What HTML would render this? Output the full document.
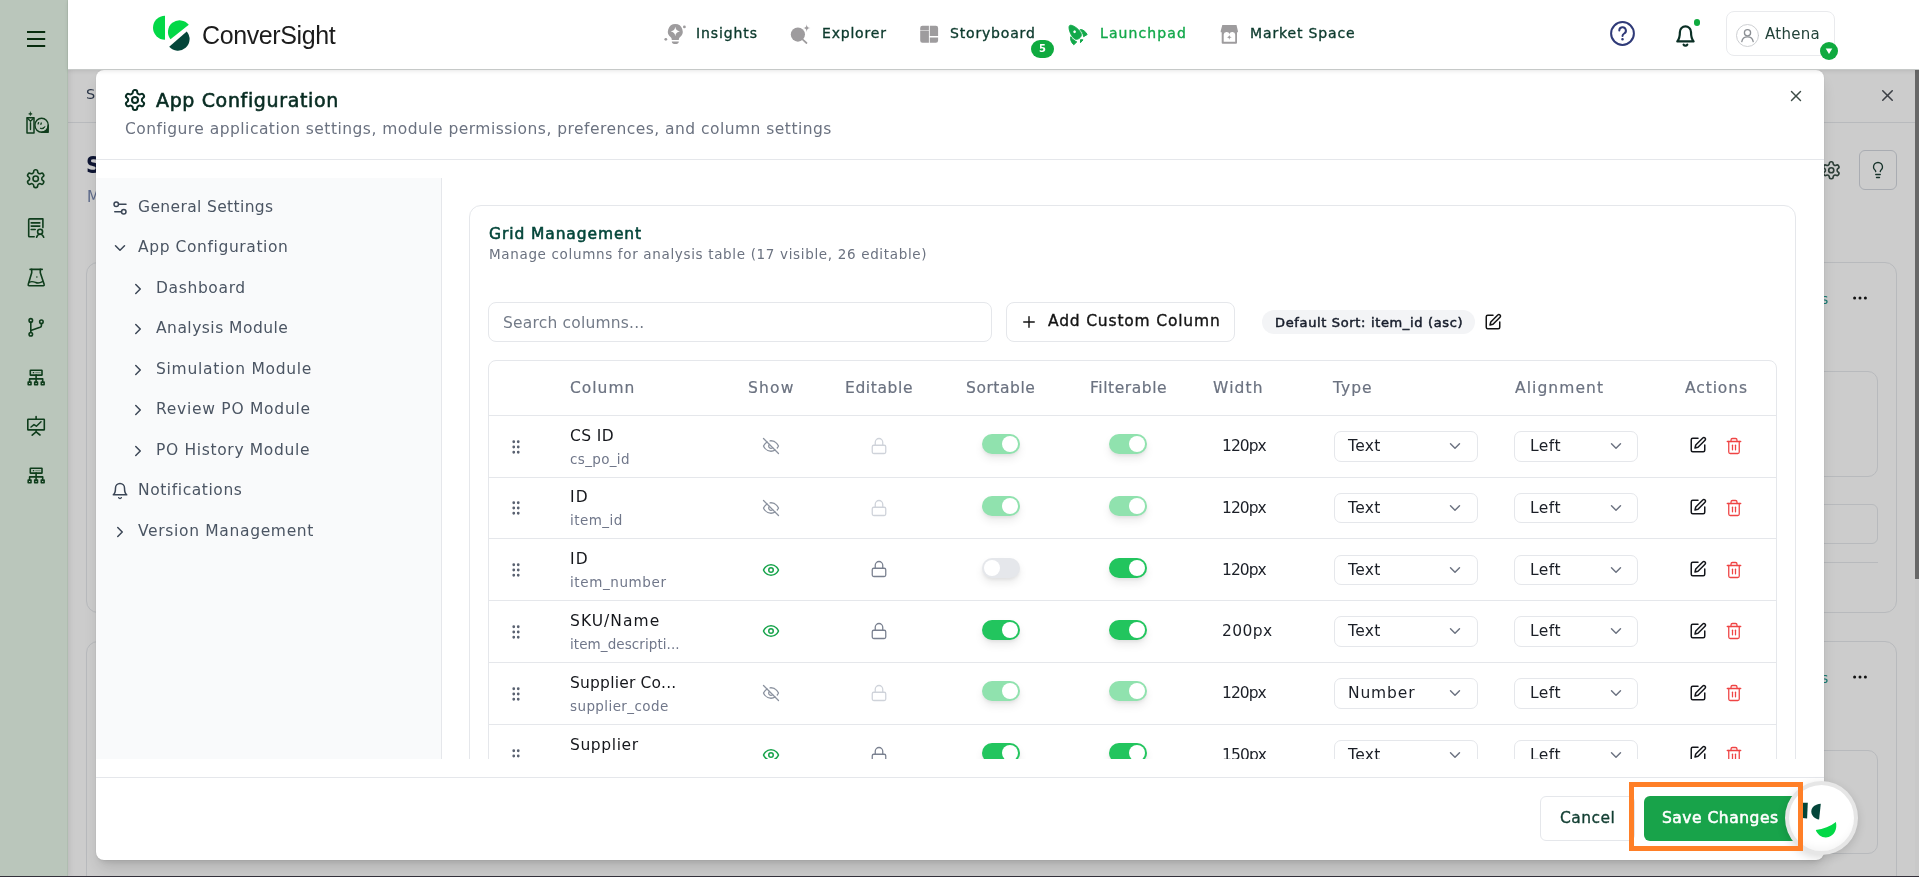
<!DOCTYPE html>
<html lang="en">
<head>
<meta charset="utf-8">
<title>ConverSight – App Configuration</title>
<style>
*{box-sizing:border-box}
html,body{margin:0;padding:0}
body{width:1919px;height:877px;overflow:hidden;position:relative;background:#ccc;font-family:"DejaVu Sans","Liberation Sans",sans-serif;-webkit-font-smoothing:antialiased}
.t{position:absolute;white-space:nowrap;line-height:normal;will-change:transform;font-family:"DejaVu Sans","Liberation Sans",sans-serif;font-weight:400}
.t.b{font-family:"DejaVu Sans Condensed","DejaVu Sans","Liberation Sans",sans-serif;font-stretch:condensed}
.t.l{font-family:"Liberation Sans","DejaVu Sans",sans-serif}
.i{position:absolute;display:block;overflow:visible}
.a{position:absolute}
.layer{position:absolute;left:0;top:0;width:1919px;height:877px}
.bx{position:absolute;border:1px solid #e5e7eb;background:#fff}
.ln{position:absolute;height:1px;background:#e5e7eb}
/* dimmed background page */
#page .bx{border-color:#b8babd;background:transparent}
#page .ln{background:#b8babd}
/* rail */
#rail{position:absolute;left:0;top:0;width:68px;height:877px;background:#bac6bb;border-right:1px solid #afbdb0;box-shadow:1px 0 6px rgba(0,0,0,.10);color:#0f3d1c}
/* top bar */
#top{position:absolute;left:68px;top:0;width:1851px;height:70px;background:#fff;border-bottom:1px solid #c6c9c8;box-shadow:0 1px 4px rgba(0,0,0,.10)}
/* modal */
#modal{position:absolute;left:96px;top:70px;width:1728px;height:790px;background:#fff;border-radius:8px;box-shadow:0 10px 15px -3px rgba(0,0,0,.14),0 4px 6px -3px rgba(0,0,0,.11),0 0 2px rgba(0,0,0,.10)}
#mbody{position:absolute;left:96px;top:178px;width:1728px;height:581px;overflow:hidden}
#mbody>.layer{left:-96px;top:-178px}
.tg{position:absolute;width:38px;height:20px;border-radius:10px;background:#22c55e;box-shadow:0 5px 8px rgba(0,0,0,.08),0 2px 3px rgba(0,0,0,.05)}
.tg::after{content:"";position:absolute;right:2px;top:2px;width:16px;height:16px;border-radius:50%;background:#fff}
.tg.dis{background:#90e2ae}
.tg.off{background:#e5e7eb}
.tg.off::after{right:auto;left:2px}
.sel{position:absolute;height:30.6px;border:1px solid #e5e7eb;border-radius:7px;background:#fff}
</style>
</head>
<body>

<main id="page" class="layer">
<div class="ln" style="left:68px;top:122px;width:1847px"></div>
<svg class="i" style="left:1877.5px;top:85.8px;width:19px;height:19px;color:#3b3f45;" viewBox="0 0 24 24" fill="none" stroke="currentColor" stroke-width="1.9" stroke-linecap="round" stroke-linejoin="round"><path d="M18 6 6 18"/><path d="m6 6 12 12"/></svg>
<svg class="i" style="left:1821px;top:160px;width:20.5px;height:20.5px;color:#2d3f38;" viewBox="0 0 24 24" fill="none" stroke="currentColor" stroke-width="1.9" stroke-linecap="round" stroke-linejoin="round"><path d="M12.22 2h-.44a2 2 0 0 0-2 2v.18a2 2 0 0 1-1 1.73l-.43.25a2 2 0 0 1-2 0l-.15-.08a2 2 0 0 0-2.73.73l-.22.38a2 2 0 0 0 .73 2.73l.15.1a2 2 0 0 1 1 1.72v.51a2 2 0 0 1-1 1.74l-.15.09a2 2 0 0 0-.73 2.73l.22.38a2 2 0 0 0 2.73.73l.15-.08a2 2 0 0 1 2 0l.43.25a2 2 0 0 1 1 1.73V20a2 2 0 0 0 2 2h.44a2 2 0 0 0 2-2v-.18a2 2 0 0 1 1-1.73l.43-.25a2 2 0 0 1 2 0l.15.08a2 2 0 0 0 2.73-.73l.22-.39a2 2 0 0 0-.73-2.73l-.15-.08a2 2 0 0 1-1-1.74v-.5a2 2 0 0 1 1-1.74l.15-.09a2 2 0 0 0 .73-2.73l-.22-.38a2 2 0 0 0-2.73-.73l-.15.08a2 2 0 0 1-2 0l-.43-.25a2 2 0 0 1-1-1.73V4a2 2 0 0 0-2-2z"/><circle cx="12" cy="12" r="3"/></svg>
<div class="bx" style="left:1859px;top:150px;width:38px;height:40px;border-radius:6px;border-color:#a9acb2"></div>
<svg class="i" style="left:1869px;top:161px;width:18px;height:18px;color:#17332b;" viewBox="0 0 24 24" fill="none" stroke="currentColor" stroke-width="1.8" stroke-linecap="round" stroke-linejoin="round"><path d="M15 14c.2-1 .7-1.7 1.5-2.5 1-.9 1.5-2.2 1.5-3.5A6 6 0 0 0 6 8c0 1 .2 2.2 1.5 3.5.7.7 1.3 1.5 1.5 2.5"/><path d="M9 18h6"/><path d="M10 22h4"/></svg>
<div class="bx" style="left:86px;top:262px;width:1811px;height:351px;border-radius:12px"></div>
<div class="bx" style="left:105px;top:371px;width:1773px;height:106px;border-radius:10px"></div>
<div class="bx" style="left:105px;top:504px;width:1773px;height:40px;border-radius:6px"></div>
<div class="ln" style="left:105px;top:562px;width:1773px"></div>
<div class="bx" style="left:86px;top:641px;width:1811px;height:351px;border-radius:12px"></div>
<div class="bx" style="left:105px;top:750px;width:1773px;height:104px;border-radius:10px"></div>
<svg class="i" style="left:1852px;top:295px;width:16px;height:6px" viewBox="0 0 16 6" fill="#111"><circle cx="2.6" cy="3" r="1.5"/><circle cx="8" cy="3" r="1.5"/><circle cx="13.4" cy="3" r="1.5"/></svg>
<svg class="i" style="left:1852px;top:674px;width:16px;height:6px" viewBox="0 0 16 6" fill="#111"><circle cx="2.6" cy="3" r="1.5"/><circle cx="8" cy="3" r="1.5"/><circle cx="13.4" cy="3" r="1.5"/></svg>
<span class="t" style="left:86px;top:85.9px;font-size:14.5px;color:#2b3648;">S</span>
<span class="t b" style="left:86px;top:152.1px;font-size:23px;color:#0e1533;font-weight:700;">S</span>
<span class="t" style="left:86.9px;top:187.9px;font-size:15px;color:#5f6c8c;">M</span>
<span class="t" style="left:1821px;top:290.5px;font-size:14px;color:#197a72;">s</span>
<span class="t" style="left:1821px;top:669.5px;font-size:14px;color:#197a72;">s</span>
<div class="a" style="left:1915px;top:70px;width:4px;height:807px;background:#c9c9c9"></div>
<div class="a" style="left:1915px;top:70px;width:4px;height:509px;background:#676767"></div>
</main>
<aside id="rail">
<svg class="i" style="left:27px;top:30px;width:19px;height:18px" viewBox="0 0 19 18" fill="none" stroke="#072c0e" stroke-width="2"><path d="M0 2.05h18.2M0 9.05h18.2M0 16h18.2"/></svg>
<svg class="i" style="left:25px;top:111px;width:26px;height:24px" viewBox="0 0 26 24" fill="none" stroke="#0f3d1c" stroke-width="1.5" stroke-linejoin="round" stroke-linecap="round"><path d="M5.4 1.1c.2 1.2.6 1.6 1.8 1.8-1.2.2-1.6.6-1.8 1.8-.2-1.2-.6-1.6-1.8-1.8 1.2-.2 1.6-.6 1.8-1.8z" fill="#0f3d1c" stroke-width=".5"/><rect x="2" y="6.8" width="7" height="15.1"/><path d="M2.3 7l3.2 3.3 3.2-3.3" stroke-width="1.3"/><path d="M5.5 11.7v6.9" stroke-width="1.4"/><ellipse cx="16.6" cy="14.25" rx="6.65" ry="7" stroke-width="1.4"/><path d="M23.25 14.25v7h-6.65a6.65 7 0 0 0 6.65-7z" fill="#0f3d1c" stroke-width="1.3"/><path d="M13.6 11.6l-.5 1.3M16.3 12l-.4 1.3" stroke-width="1.3"/><path d="M15.5 17.4c1.8.3 3.3-.5 4.3-1.9-.3 1.9-2.4 3-4.3 1.9z" fill="#0f3d1c" stroke-width=".9"/></svg>
<svg class="i" style="left:25.2px;top:168.4px;width:21.4px;height:21.4px;" viewBox="0 0 24 24" fill="none" stroke="currentColor" stroke-width="1.8" stroke-linecap="round" stroke-linejoin="round"><path d="M12.22 2h-.44a2 2 0 0 0-2 2v.18a2 2 0 0 1-1 1.73l-.43.25a2 2 0 0 1-2 0l-.15-.08a2 2 0 0 0-2.73.73l-.22.38a2 2 0 0 0 .73 2.73l.15.1a2 2 0 0 1 1 1.72v.51a2 2 0 0 1-1 1.74l-.15.09a2 2 0 0 0-.73 2.73l.22.38a2 2 0 0 0 2.73.73l.15-.08a2 2 0 0 1 2 0l.43.25a2 2 0 0 1 1 1.73V20a2 2 0 0 0 2 2h.44a2 2 0 0 0 2-2v-.18a2 2 0 0 1 1-1.73l.43-.25a2 2 0 0 1 2 0l.15.08a2 2 0 0 0 2.73-.73l.22-.39a2 2 0 0 0-.73-2.73l-.15-.08a2 2 0 0 1-1-1.74v-.5a2 2 0 0 1 1-1.74l.15-.09a2 2 0 0 0 .73-2.73l-.22-.38a2 2 0 0 0-2.73-.73l-.15.08a2 2 0 0 1-2 0l-.43-.25a2 2 0 0 1-1-1.73V4a2 2 0 0 0-2-2z"/><circle cx="12" cy="12" r="3"/></svg>
<svg class="i" style="left:25px;top:216px;width:22px;height:24px" viewBox="0 0 22 24" fill="none" stroke="#0f3d1c" stroke-width="1.6" stroke-linecap="round" stroke-linejoin="round"><path d="M9.2 20.8H4.6a.9.9 0 0 1-.9-.9V3.8a.9.9 0 0 1 .9-.9H17.9v8.7"/><path d="M6.2 6.9h8.6M6.2 10.1h8.6M6.2 13.5h4"/><circle cx="15.1" cy="15.7" r="2.5"/><path d="M11.6 21.3c.6-2 1.9-3 3.5-3s2.9 1 3.6 3"/></svg>
<svg class="i" style="left:26px;top:268px;width:20px;height:20px" viewBox="0 0 20 20" fill="none" stroke="#0f3d1c" stroke-width="1.6" stroke-linecap="round" stroke-linejoin="round"><path d="M4.1 1.4h12.1"/><path d="M5.7 1.4v3.3L2.2 16.5a.95.95 0 0 0 .9 1.3h14.2a.95.95 0 0 0 .9-1.3L14.3 4.7V1.4"/><path d="M3.5 14.2c2.4-1.3 4-.6 6.2.3s4.5.4 6.7-.9" stroke-width="1.4"/><circle cx="10.9" cy="9" r=".75" fill="#0f3d1c" stroke="none"/></svg>
<svg class="i" style="left:26px;top:316px;width:20px;height:22px" viewBox="0 0 20 22" fill="none" stroke="#0f3d1c" stroke-width="1.6" stroke-linecap="round" stroke-linejoin="round"><circle cx="4.8" cy="4.4" r="1.75"/><circle cx="4.8" cy="18.3" r="1.75"/><circle cx="15.4" cy="5.7" r="1.75"/><path d="M4.8 6.2v10.3"/><path d="M15.4 7.5v2.2c0 .8-.5 1.3-1.3 1.6L4.8 14.4"/></svg>
<svg class="i" style="left:26px;top:367.5px;width:20px;height:19px" viewBox="0 0 20 19" fill="none" stroke="#0f3d1c" stroke-width="1.6" stroke-linecap="round" stroke-linejoin="round" stroke-width="1.5"><rect x="4.3" y="2.2" width="11.7" height="4.9" rx=".4"/><path d="M7.3 4.7h.4" stroke-width="1.3"/><path d="M9.6 4.7h4.6" stroke-width=".7" opacity=".7"/><path d="M10.1 7.1v6.3M3.6 13.4v-2.5h13.1v2.5"/><rect x="2.2" y="14.1" width="2.8" height="2.7"/><rect x="8.7" y="14.1" width="2.8" height="2.7"/><rect x="15.3" y="14.1" width="2.8" height="2.7"/></svg>
<svg class="i" style="left:26px;top:466.2px;width:20px;height:19px" viewBox="0 0 20 19" fill="none" stroke="#0f3d1c" stroke-width="1.6" stroke-linecap="round" stroke-linejoin="round" stroke-width="1.5"><rect x="4.3" y="2.2" width="11.7" height="4.9" rx=".4"/><path d="M7.3 4.7h.4" stroke-width="1.3"/><path d="M9.6 4.7h4.6" stroke-width=".7" opacity=".7"/><path d="M10.1 7.1v6.3M3.6 13.4v-2.5h13.1v2.5"/><rect x="2.2" y="14.1" width="2.8" height="2.7"/><rect x="8.7" y="14.1" width="2.8" height="2.7"/><rect x="15.3" y="14.1" width="2.8" height="2.7"/></svg>
<svg class="i" style="left:25px;top:415px;width:22px;height:22px" viewBox="0 0 22 22" fill="none" stroke="#0f3d1c" stroke-width="1.6" stroke-linecap="round" stroke-linejoin="round" stroke-width="1.7"><rect x="2.8" y="4.3" width="16.5" height="10.6" rx=".5"/><path d="M11.1 1.6v2.7M11.1 14.9v2M11.1 16.9L7.2 20.2M11.1 16.9L15 20"/><path d="M6 12l3-2.4 2.4 1.6 4.6-4.4" stroke-width="1.5"/></svg>
</aside>
<section id="modal"></section>
<div class="layer" id="mhead">
<svg class="i" style="left:123.4px;top:88px;width:24px;height:24px;color:#082c22;" viewBox="0 0 24 24" fill="none" stroke="currentColor" stroke-width="2" stroke-linecap="round" stroke-linejoin="round"><path d="M12.22 2h-.44a2 2 0 0 0-2 2v.18a2 2 0 0 1-1 1.73l-.43.25a2 2 0 0 1-2 0l-.15-.08a2 2 0 0 0-2.73.73l-.22.38a2 2 0 0 0 .73 2.73l.15.1a2 2 0 0 1 1 1.72v.51a2 2 0 0 1-1 1.74l-.15.09a2 2 0 0 0-.73 2.73l.22.38a2 2 0 0 0 2.73.73l.15-.08a2 2 0 0 1 2 0l.43.25a2 2 0 0 1 1 1.73V20a2 2 0 0 0 2 2h.44a2 2 0 0 0 2-2v-.18a2 2 0 0 1 1-1.73l.43-.25a2 2 0 0 1 2 0l.15.08a2 2 0 0 0 2.73-.73l.22-.39a2 2 0 0 0-.73-2.73l-.15-.08a2 2 0 0 1-1-1.74v-.5a2 2 0 0 1 1-1.74l.15-.09a2 2 0 0 0 .73-2.73l-.22-.38a2 2 0 0 0-2.73-.73l-.15.08a2 2 0 0 1-2 0l-.43-.25a2 2 0 0 1-1-1.73V4a2 2 0 0 0-2-2z"/><circle cx="12" cy="12" r="3"/></svg>
<svg class="i" style="left:1787.4px;top:87.2px;width:18px;height:18px;color:#3c4b46;" viewBox="0 0 24 24" fill="none" stroke="currentColor" stroke-width="1.9" stroke-linecap="round" stroke-linejoin="round"><path d="M18 6 6 18"/><path d="m6 6 12 12"/></svg>
<span class="t" style="left:155.8px;top:89px;font-size:19px;color:#082c22;letter-spacing:0.64px;-webkit-text-stroke:.6px currentColor;">App Configuration</span>
<span class="t" style="left:124.7px;top:119.9px;font-size:15.5px;color:#6b7280;letter-spacing:0.47px;">Configure application settings, module permissions, preferences, and column settings</span>
<div class="ln" style="left:96px;top:159px;width:1728px"></div>
</div>
<div id="mbody"><div class="layer">
<nav class="a" style="left:96px;top:178px;width:346px;height:581px;background:#f9fafb;border-right:1px solid #e5e7eb"></nav>
<svg class="i" style="left:111px;top:199px;width:18px;height:18px;color:#3b4656;" viewBox="0 0 24 24" fill="none" stroke="currentColor" stroke-width="2" stroke-linecap="round" stroke-linejoin="round"><path d="M20 7h-9"/><path d="M14 17H5"/><circle cx="17" cy="17" r="3"/><circle cx="7" cy="7" r="3"/></svg>
<svg class="i" style="left:111px;top:239.1px;width:18px;height:18px;color:#3b4656;" viewBox="0 0 24 24" fill="none" stroke="currentColor" stroke-width="2" stroke-linecap="round" stroke-linejoin="round"><path d="m6 9 6 6 6-6"/></svg>
<svg class="i" style="left:129px;top:279.8px;width:18px;height:18px;color:#3b4656;" viewBox="0 0 24 24" fill="none" stroke="currentColor" stroke-width="2" stroke-linecap="round" stroke-linejoin="round"><path d="m9 18 6-6-6-6"/></svg>
<svg class="i" style="left:129px;top:319.9px;width:18px;height:18px;color:#3b4656;" viewBox="0 0 24 24" fill="none" stroke="currentColor" stroke-width="2" stroke-linecap="round" stroke-linejoin="round"><path d="m9 18 6-6-6-6"/></svg>
<svg class="i" style="left:129px;top:360.8px;width:18px;height:18px;color:#3b4656;" viewBox="0 0 24 24" fill="none" stroke="currentColor" stroke-width="2" stroke-linecap="round" stroke-linejoin="round"><path d="m9 18 6-6-6-6"/></svg>
<svg class="i" style="left:129px;top:401px;width:18px;height:18px;color:#3b4656;" viewBox="0 0 24 24" fill="none" stroke="currentColor" stroke-width="2" stroke-linecap="round" stroke-linejoin="round"><path d="m9 18 6-6-6-6"/></svg>
<svg class="i" style="left:129px;top:441.8px;width:18px;height:18px;color:#3b4656;" viewBox="0 0 24 24" fill="none" stroke="currentColor" stroke-width="2" stroke-linecap="round" stroke-linejoin="round"><path d="m9 18 6-6-6-6"/></svg>
<svg class="i" style="left:111px;top:482px;width:18px;height:18px;color:#3b4656;" viewBox="0 0 24 24" fill="none" stroke="currentColor" stroke-width="2" stroke-linecap="round" stroke-linejoin="round"><path d="M6 8a6 6 0 0 1 12 0c0 7 3 9 3 9H3s3-2 3-9"/><path d="M10.3 21a1.94 1.94 0 0 0 3.4 0"/></svg>
<svg class="i" style="left:111px;top:522.5px;width:18px;height:18px;color:#3b4656;" viewBox="0 0 24 24" fill="none" stroke="currentColor" stroke-width="2" stroke-linecap="round" stroke-linejoin="round"><path d="m9 18 6-6-6-6"/></svg>
<span class="t" style="left:138.1px;top:197.8px;font-size:15.5px;color:#4b5563;letter-spacing:0.37px;">General Settings</span>
<span class="t" style="left:138.1px;top:237.9px;font-size:15.5px;color:#4b5563;letter-spacing:0.6px;">App Configuration</span>
<span class="t" style="left:155.8px;top:278.8px;font-size:15.5px;color:#4b5563;letter-spacing:0.64px;">Dashboard</span>
<span class="t" style="left:155.8px;top:318.9px;font-size:15.5px;color:#4b5563;letter-spacing:0.48px;">Analysis Module</span>
<span class="t" style="left:155.8px;top:359.8px;font-size:15.5px;color:#4b5563;letter-spacing:0.72px;">Simulation Module</span>
<span class="t" style="left:155.8px;top:400px;font-size:15.5px;color:#4b5563;letter-spacing:0.73px;">Review PO Module</span>
<span class="t" style="left:155.8px;top:440.8px;font-size:15.5px;color:#4b5563;letter-spacing:0.66px;">PO History Module</span>
<span class="t" style="left:138.1px;top:481.2px;font-size:15.5px;color:#4b5563;letter-spacing:0.57px;">Notifications</span>
<span class="t" style="left:138.1px;top:521.6px;font-size:15.5px;color:#4b5563;letter-spacing:0.67px;">Version Management</span>
<div class="bx" style="left:469px;top:205px;width:1327px;height:700px;border-radius:12px"></div>
<div class="bx" style="left:488px;top:302px;width:503.5px;height:40px;border-radius:8px"></div>
<div class="bx" style="left:1006px;top:302px;width:229px;height:40px;border-radius:8px"></div>
<svg class="i" style="left:1020px;top:313px;width:18px;height:18px;color:#141414;" viewBox="0 0 24 24" fill="none" stroke="currentColor" stroke-width="1.9" stroke-linecap="round" stroke-linejoin="round"><path d="M5 12h14"/><path d="M12 5v14"/></svg>
<div class="a" style="left:1262px;top:310px;width:212.5px;height:24px;border-radius:12px;background:#f3f4f6"></div>
<svg class="i" style="left:1484.2px;top:312.9px;width:18px;height:18px;color:#141414;" viewBox="0 0 24 24" fill="none" stroke="currentColor" stroke-width="2" stroke-linecap="round" stroke-linejoin="round"><path d="M12 3H5a2 2 0 0 0-2 2v14a2 2 0 0 0 2 2h14a2 2 0 0 0 2-2v-7"/><path d="M18.375 2.625a2.121 2.121 0 1 1 3 3L12 15l-4 1 1-4Z"/></svg>
<span class="t" style="left:488.6px;top:224.9px;font-size:15.5px;color:#04463a;letter-spacing:0.9px;-webkit-text-stroke:.55px currentColor;">Grid Management</span>
<span class="t" style="left:488.6px;top:245.8px;font-size:13.5px;color:#6b7280;letter-spacing:0.66px;">Manage columns for analysis table (17 visible, 26 editable)</span>
<span class="t" style="left:503.2px;top:314px;font-size:15.5px;color:#737b88;letter-spacing:0.2px;">Search columns...</span>
<span class="t" style="left:1048px;top:312.4px;font-size:15.5px;color:#141414;letter-spacing:0.82px;-webkit-text-stroke:.35px currentColor;">Add Custom Column</span>
<span class="t" style="left:1274.6px;top:315.1px;font-size:13px;color:#171d2b;letter-spacing:0.65px;-webkit-text-stroke:.5px currentColor;">Default Sort: item_id (asc)</span>
<div class="bx" style="left:488px;top:360px;width:1289px;height:600px;border-radius:8px"></div>
<span class="t" style="left:570.2px;top:378.9px;font-size:15.5px;color:#6b7280;letter-spacing:0.99px;-webkit-text-stroke:.2px currentColor;">Column</span>
<span class="t" style="left:748.3px;top:378.9px;font-size:15.5px;color:#6b7280;letter-spacing:1.16px;-webkit-text-stroke:.2px currentColor;">Show</span>
<span class="t" style="left:845.2px;top:378.9px;font-size:15.5px;color:#6b7280;letter-spacing:0.61px;-webkit-text-stroke:.2px currentColor;">Editable</span>
<span class="t" style="left:966.3px;top:378.9px;font-size:15.5px;color:#6b7280;letter-spacing:0.56px;-webkit-text-stroke:.2px currentColor;">Sortable</span>
<span class="t" style="left:1089.9px;top:378.9px;font-size:15.5px;color:#6b7280;letter-spacing:0.56px;-webkit-text-stroke:.2px currentColor;">Filterable</span>
<span class="t" style="left:1212.9px;top:378.9px;font-size:15.5px;color:#6b7280;letter-spacing:1.16px;-webkit-text-stroke:.2px currentColor;">Width</span>
<span class="t" style="left:1333.4px;top:378.9px;font-size:15.5px;color:#6b7280;letter-spacing:1px;-webkit-text-stroke:.2px currentColor;">Type</span>
<span class="t" style="left:1514.6px;top:378.9px;font-size:15.5px;color:#6b7280;letter-spacing:1.08px;-webkit-text-stroke:.2px currentColor;">Alignment</span>
<span class="t" style="left:1685.4px;top:378.9px;font-size:15.5px;color:#6b7280;letter-spacing:0.9px;-webkit-text-stroke:.2px currentColor;">Actions</span>
<div class="ln" style="left:489px;top:415px;width:1287px"></div>
<svg class="i" style="left:507px;top:437.59999999999997px;width:18px;height:18px;color:#596170;fill:#596170;" viewBox="0 0 24 24" fill="none" stroke="currentColor" stroke-width="1.7" stroke-linecap="round" stroke-linejoin="round"><circle cx="9" cy="12" r="1"/><circle cx="9" cy="5" r="1"/><circle cx="9" cy="19" r="1"/><circle cx="15" cy="12" r="1"/><circle cx="15" cy="5" r="1"/><circle cx="15" cy="19" r="1"/></svg>
<svg class="i" style="left:762.2px;top:436.9px;width:18px;height:18px;color:#8a919e;" viewBox="0 0 24 24" fill="none" stroke="currentColor" stroke-width="1.7" stroke-linecap="round" stroke-linejoin="round"><path d="M9.88 9.88a3 3 0 1 0 4.24 4.24"/><path d="M10.73 5.08A10.43 10.43 0 0 1 12 5c7 0 10 7 10 7a13.16 13.16 0 0 1-1.67 2.68"/><path d="M6.61 6.61A13.526 13.526 0 0 0 2 12s3 7 10 7a9.74 9.74 0 0 0 5.39-1.61"/><path d="M2 2l20 20"/></svg>
<svg class="i" style="left:870px;top:436.7px;width:18px;height:18px;color:#cfd3da;" viewBox="0 0 24 24" fill="none" stroke="currentColor" stroke-width="1.7" stroke-linecap="round" stroke-linejoin="round"><rect width="18" height="11" x="3" y="11" rx="2" ry="2"/><path d="M7 11V7a5 5 0 0 1 10 0v4"/></svg>
<div class="tg dis" style="left:982px;top:434.2px"></div>
<div class="tg dis" style="left:1109px;top:434.2px"></div>
<div class="sel" style="left:1333.5px;top:431px;width:144.5px"></div>
<div class="sel" style="left:1514.2px;top:431px;width:124px"></div>
<svg class="i" style="left:1446.2px;top:437px;width:18px;height:18px;color:#6b7280;" viewBox="0 0 24 24" fill="none" stroke="currentColor" stroke-width="1.9" stroke-linecap="round" stroke-linejoin="round"><path d="m6 9 6 6 6-6"/></svg>
<svg class="i" style="left:1606.5px;top:437px;width:18px;height:18px;color:#6b7280;" viewBox="0 0 24 24" fill="none" stroke="currentColor" stroke-width="1.9" stroke-linecap="round" stroke-linejoin="round"><path d="m6 9 6 6 6-6"/></svg>
<svg class="i" style="left:1689.2px;top:436.29999999999995px;width:18px;height:18px;color:#15171c;" viewBox="0 0 24 24" fill="none" stroke="currentColor" stroke-width="2" stroke-linecap="round" stroke-linejoin="round"><path d="M12 3H5a2 2 0 0 0-2 2v14a2 2 0 0 0 2 2h14a2 2 0 0 0 2-2v-7"/><path d="M18.375 2.625a2.121 2.121 0 1 1 3 3L12 15l-4 1 1-4Z"/></svg>
<svg class="i" style="left:1725.4px;top:436.9px;width:18px;height:18px;color:#ef4444;" viewBox="0 0 24 24" fill="none" stroke="currentColor" stroke-width="1.7" stroke-linecap="round" stroke-linejoin="round"><path d="M3 6h18"/><path d="M19 6v14c0 1-1 2-2 2H7c-1 0-2-1-2-2V6"/><path d="M8 6V4c0-1 1-2 2-2h4c1 0 2 1 2 2v2"/><path d="M10 11v6"/><path d="M14 11v6"/></svg>
<span class="t" style="left:570.2px;top:426.6px;font-size:15.5px;color:#15171c;letter-spacing:0.42px;">CS ID</span>
<span class="t" style="left:570.2px;top:450.6px;font-size:13.5px;color:#70778a;letter-spacing:0.34px;">cs_po_id</span>
<span class="t" style="left:1221.5px;top:436.9px;font-size:15.5px;color:#1b1f27;letter-spacing:-0.98px;">120px</span>
<span class="t" style="left:1347.6px;top:436.9px;font-size:15.5px;color:#1b1f27;letter-spacing:0.35px;">Text</span>
<span class="t" style="left:1529.9px;top:436.9px;font-size:15.5px;color:#1b1f27;letter-spacing:0.48px;">Left</span>
<div class="ln" style="left:489px;top:477px;width:1287px"></div>
<svg class="i" style="left:507px;top:499.4px;width:18px;height:18px;color:#596170;fill:#596170;" viewBox="0 0 24 24" fill="none" stroke="currentColor" stroke-width="1.7" stroke-linecap="round" stroke-linejoin="round"><circle cx="9" cy="12" r="1"/><circle cx="9" cy="5" r="1"/><circle cx="9" cy="19" r="1"/><circle cx="15" cy="12" r="1"/><circle cx="15" cy="5" r="1"/><circle cx="15" cy="19" r="1"/></svg>
<svg class="i" style="left:762.2px;top:498.7px;width:18px;height:18px;color:#8a919e;" viewBox="0 0 24 24" fill="none" stroke="currentColor" stroke-width="1.7" stroke-linecap="round" stroke-linejoin="round"><path d="M9.88 9.88a3 3 0 1 0 4.24 4.24"/><path d="M10.73 5.08A10.43 10.43 0 0 1 12 5c7 0 10 7 10 7a13.16 13.16 0 0 1-1.67 2.68"/><path d="M6.61 6.61A13.526 13.526 0 0 0 2 12s3 7 10 7a9.74 9.74 0 0 0 5.39-1.61"/><path d="M2 2l20 20"/></svg>
<svg class="i" style="left:870px;top:498.5px;width:18px;height:18px;color:#cfd3da;" viewBox="0 0 24 24" fill="none" stroke="currentColor" stroke-width="1.7" stroke-linecap="round" stroke-linejoin="round"><rect width="18" height="11" x="3" y="11" rx="2" ry="2"/><path d="M7 11V7a5 5 0 0 1 10 0v4"/></svg>
<div class="tg dis" style="left:982px;top:496px"></div>
<div class="tg dis" style="left:1109px;top:496px"></div>
<div class="sel" style="left:1333.5px;top:492.8px;width:144.5px"></div>
<div class="sel" style="left:1514.2px;top:492.8px;width:124px"></div>
<svg class="i" style="left:1446.2px;top:498.8px;width:18px;height:18px;color:#6b7280;" viewBox="0 0 24 24" fill="none" stroke="currentColor" stroke-width="1.9" stroke-linecap="round" stroke-linejoin="round"><path d="m6 9 6 6 6-6"/></svg>
<svg class="i" style="left:1606.5px;top:498.8px;width:18px;height:18px;color:#6b7280;" viewBox="0 0 24 24" fill="none" stroke="currentColor" stroke-width="1.9" stroke-linecap="round" stroke-linejoin="round"><path d="m6 9 6 6 6-6"/></svg>
<svg class="i" style="left:1689.2px;top:498.09999999999997px;width:18px;height:18px;color:#15171c;" viewBox="0 0 24 24" fill="none" stroke="currentColor" stroke-width="2" stroke-linecap="round" stroke-linejoin="round"><path d="M12 3H5a2 2 0 0 0-2 2v14a2 2 0 0 0 2 2h14a2 2 0 0 0 2-2v-7"/><path d="M18.375 2.625a2.121 2.121 0 1 1 3 3L12 15l-4 1 1-4Z"/></svg>
<svg class="i" style="left:1725.4px;top:498.7px;width:18px;height:18px;color:#ef4444;" viewBox="0 0 24 24" fill="none" stroke="currentColor" stroke-width="1.7" stroke-linecap="round" stroke-linejoin="round"><path d="M3 6h18"/><path d="M19 6v14c0 1-1 2-2 2H7c-1 0-2-1-2-2V6"/><path d="M8 6V4c0-1 1-2 2-2h4c1 0 2 1 2 2v2"/><path d="M10 11v6"/><path d="M14 11v6"/></svg>
<span class="t" style="left:570.2px;top:488.4px;font-size:15.5px;color:#15171c;letter-spacing:1.28px;">ID</span>
<span class="t" style="left:570.2px;top:512.4px;font-size:13.5px;color:#70778a;letter-spacing:0.45px;">item_id</span>
<span class="t" style="left:1221.5px;top:498.7px;font-size:15.5px;color:#1b1f27;letter-spacing:-0.98px;">120px</span>
<span class="t" style="left:1347.6px;top:498.7px;font-size:15.5px;color:#1b1f27;letter-spacing:0.35px;">Text</span>
<span class="t" style="left:1529.9px;top:498.7px;font-size:15.5px;color:#1b1f27;letter-spacing:0.48px;">Left</span>
<div class="ln" style="left:489px;top:538px;width:1287px"></div>
<svg class="i" style="left:507px;top:561.2px;width:18px;height:18px;color:#596170;fill:#596170;" viewBox="0 0 24 24" fill="none" stroke="currentColor" stroke-width="1.7" stroke-linecap="round" stroke-linejoin="round"><circle cx="9" cy="12" r="1"/><circle cx="9" cy="5" r="1"/><circle cx="9" cy="19" r="1"/><circle cx="15" cy="12" r="1"/><circle cx="15" cy="5" r="1"/><circle cx="15" cy="19" r="1"/></svg>
<svg class="i" style="left:761.8px;top:560.5px;width:18px;height:18px;color:#16a34a;" viewBox="0 0 24 24" fill="none" stroke="currentColor" stroke-width="2" stroke-linecap="round" stroke-linejoin="round"><path d="M2 12s3-7 10-7 10 7 10 7-3 7-10 7-10-7-10-7Z"/><circle cx="12" cy="12" r="3"/></svg>
<svg class="i" style="left:870px;top:560.3px;width:18px;height:18px;color:#7a8190;" viewBox="0 0 24 24" fill="none" stroke="currentColor" stroke-width="1.7" stroke-linecap="round" stroke-linejoin="round"><rect width="18" height="11" x="3" y="11" rx="2" ry="2"/><path d="M7 11V7a5 5 0 0 1 10 0v4"/></svg>
<div class="tg off" style="left:982px;top:557.8px"></div>
<div class="tg " style="left:1109px;top:557.8px"></div>
<div class="sel" style="left:1333.5px;top:554.6px;width:144.5px"></div>
<div class="sel" style="left:1514.2px;top:554.6px;width:124px"></div>
<svg class="i" style="left:1446.2px;top:560.6px;width:18px;height:18px;color:#6b7280;" viewBox="0 0 24 24" fill="none" stroke="currentColor" stroke-width="1.9" stroke-linecap="round" stroke-linejoin="round"><path d="m6 9 6 6 6-6"/></svg>
<svg class="i" style="left:1606.5px;top:560.6px;width:18px;height:18px;color:#6b7280;" viewBox="0 0 24 24" fill="none" stroke="currentColor" stroke-width="1.9" stroke-linecap="round" stroke-linejoin="round"><path d="m6 9 6 6 6-6"/></svg>
<svg class="i" style="left:1689.2px;top:559.9px;width:18px;height:18px;color:#15171c;" viewBox="0 0 24 24" fill="none" stroke="currentColor" stroke-width="2" stroke-linecap="round" stroke-linejoin="round"><path d="M12 3H5a2 2 0 0 0-2 2v14a2 2 0 0 0 2 2h14a2 2 0 0 0 2-2v-7"/><path d="M18.375 2.625a2.121 2.121 0 1 1 3 3L12 15l-4 1 1-4Z"/></svg>
<svg class="i" style="left:1725.4px;top:560.5px;width:18px;height:18px;color:#ef4444;" viewBox="0 0 24 24" fill="none" stroke="currentColor" stroke-width="1.7" stroke-linecap="round" stroke-linejoin="round"><path d="M3 6h18"/><path d="M19 6v14c0 1-1 2-2 2H7c-1 0-2-1-2-2V6"/><path d="M8 6V4c0-1 1-2 2-2h4c1 0 2 1 2 2v2"/><path d="M10 11v6"/><path d="M14 11v6"/></svg>
<span class="t" style="left:570.2px;top:550.2px;font-size:15.5px;color:#15171c;letter-spacing:1.08px;">ID</span>
<span class="t" style="left:570.2px;top:574.2px;font-size:13.5px;color:#70778a;letter-spacing:0.6px;">item_number</span>
<span class="t" style="left:1221.5px;top:560.5px;font-size:15.5px;color:#1b1f27;letter-spacing:-0.98px;">120px</span>
<span class="t" style="left:1347.6px;top:560.5px;font-size:15.5px;color:#1b1f27;letter-spacing:0.35px;">Text</span>
<span class="t" style="left:1529.9px;top:560.5px;font-size:15.5px;color:#1b1f27;letter-spacing:0.48px;">Left</span>
<div class="ln" style="left:489px;top:600px;width:1287px"></div>
<svg class="i" style="left:507px;top:623px;width:18px;height:18px;color:#596170;fill:#596170;" viewBox="0 0 24 24" fill="none" stroke="currentColor" stroke-width="1.7" stroke-linecap="round" stroke-linejoin="round"><circle cx="9" cy="12" r="1"/><circle cx="9" cy="5" r="1"/><circle cx="9" cy="19" r="1"/><circle cx="15" cy="12" r="1"/><circle cx="15" cy="5" r="1"/><circle cx="15" cy="19" r="1"/></svg>
<svg class="i" style="left:761.8px;top:622.3px;width:18px;height:18px;color:#16a34a;" viewBox="0 0 24 24" fill="none" stroke="currentColor" stroke-width="2" stroke-linecap="round" stroke-linejoin="round"><path d="M2 12s3-7 10-7 10 7 10 7-3 7-10 7-10-7-10-7Z"/><circle cx="12" cy="12" r="3"/></svg>
<svg class="i" style="left:870px;top:622.0999999999999px;width:18px;height:18px;color:#7a8190;" viewBox="0 0 24 24" fill="none" stroke="currentColor" stroke-width="1.7" stroke-linecap="round" stroke-linejoin="round"><rect width="18" height="11" x="3" y="11" rx="2" ry="2"/><path d="M7 11V7a5 5 0 0 1 10 0v4"/></svg>
<div class="tg " style="left:982px;top:619.6px"></div>
<div class="tg " style="left:1109px;top:619.6px"></div>
<div class="sel" style="left:1333.5px;top:616.4px;width:144.5px"></div>
<div class="sel" style="left:1514.2px;top:616.4px;width:124px"></div>
<svg class="i" style="left:1446.2px;top:622.4px;width:18px;height:18px;color:#6b7280;" viewBox="0 0 24 24" fill="none" stroke="currentColor" stroke-width="1.9" stroke-linecap="round" stroke-linejoin="round"><path d="m6 9 6 6 6-6"/></svg>
<svg class="i" style="left:1606.5px;top:622.4px;width:18px;height:18px;color:#6b7280;" viewBox="0 0 24 24" fill="none" stroke="currentColor" stroke-width="1.9" stroke-linecap="round" stroke-linejoin="round"><path d="m6 9 6 6 6-6"/></svg>
<svg class="i" style="left:1689.2px;top:621.6999999999999px;width:18px;height:18px;color:#15171c;" viewBox="0 0 24 24" fill="none" stroke="currentColor" stroke-width="2" stroke-linecap="round" stroke-linejoin="round"><path d="M12 3H5a2 2 0 0 0-2 2v14a2 2 0 0 0 2 2h14a2 2 0 0 0 2-2v-7"/><path d="M18.375 2.625a2.121 2.121 0 1 1 3 3L12 15l-4 1 1-4Z"/></svg>
<svg class="i" style="left:1725.4px;top:622.3px;width:18px;height:18px;color:#ef4444;" viewBox="0 0 24 24" fill="none" stroke="currentColor" stroke-width="1.7" stroke-linecap="round" stroke-linejoin="round"><path d="M3 6h18"/><path d="M19 6v14c0 1-1 2-2 2H7c-1 0-2-1-2-2V6"/><path d="M8 6V4c0-1 1-2 2-2h4c1 0 2 1 2 2v2"/><path d="M10 11v6"/><path d="M14 11v6"/></svg>
<span class="t" style="left:570.2px;top:612px;font-size:15.5px;color:#15171c;letter-spacing:1.04px;">SKU/Name</span>
<span class="t" style="left:570.2px;top:636px;font-size:13.5px;color:#70778a;letter-spacing:0.08px;">item_descripti...</span>
<span class="t" style="left:1221.5px;top:622.3px;font-size:15.5px;color:#1b1f27;letter-spacing:0.42px;">200px</span>
<span class="t" style="left:1347.6px;top:622.3px;font-size:15.5px;color:#1b1f27;letter-spacing:0.35px;">Text</span>
<span class="t" style="left:1529.9px;top:622.3px;font-size:15.5px;color:#1b1f27;letter-spacing:0.48px;">Left</span>
<div class="ln" style="left:489px;top:662px;width:1287px"></div>
<svg class="i" style="left:507px;top:684.8000000000001px;width:18px;height:18px;color:#596170;fill:#596170;" viewBox="0 0 24 24" fill="none" stroke="currentColor" stroke-width="1.7" stroke-linecap="round" stroke-linejoin="round"><circle cx="9" cy="12" r="1"/><circle cx="9" cy="5" r="1"/><circle cx="9" cy="19" r="1"/><circle cx="15" cy="12" r="1"/><circle cx="15" cy="5" r="1"/><circle cx="15" cy="19" r="1"/></svg>
<svg class="i" style="left:762.2px;top:684.1px;width:18px;height:18px;color:#8a919e;" viewBox="0 0 24 24" fill="none" stroke="currentColor" stroke-width="1.7" stroke-linecap="round" stroke-linejoin="round"><path d="M9.88 9.88a3 3 0 1 0 4.24 4.24"/><path d="M10.73 5.08A10.43 10.43 0 0 1 12 5c7 0 10 7 10 7a13.16 13.16 0 0 1-1.67 2.68"/><path d="M6.61 6.61A13.526 13.526 0 0 0 2 12s3 7 10 7a9.74 9.74 0 0 0 5.39-1.61"/><path d="M2 2l20 20"/></svg>
<svg class="i" style="left:870px;top:683.9px;width:18px;height:18px;color:#cfd3da;" viewBox="0 0 24 24" fill="none" stroke="currentColor" stroke-width="1.7" stroke-linecap="round" stroke-linejoin="round"><rect width="18" height="11" x="3" y="11" rx="2" ry="2"/><path d="M7 11V7a5 5 0 0 1 10 0v4"/></svg>
<div class="tg dis" style="left:982px;top:681.4px"></div>
<div class="tg dis" style="left:1109px;top:681.4px"></div>
<div class="sel" style="left:1333.5px;top:678.2px;width:144.5px"></div>
<div class="sel" style="left:1514.2px;top:678.2px;width:124px"></div>
<svg class="i" style="left:1446.2px;top:684.2px;width:18px;height:18px;color:#6b7280;" viewBox="0 0 24 24" fill="none" stroke="currentColor" stroke-width="1.9" stroke-linecap="round" stroke-linejoin="round"><path d="m6 9 6 6 6-6"/></svg>
<svg class="i" style="left:1606.5px;top:684.2px;width:18px;height:18px;color:#6b7280;" viewBox="0 0 24 24" fill="none" stroke="currentColor" stroke-width="1.9" stroke-linecap="round" stroke-linejoin="round"><path d="m6 9 6 6 6-6"/></svg>
<svg class="i" style="left:1689.2px;top:683.5px;width:18px;height:18px;color:#15171c;" viewBox="0 0 24 24" fill="none" stroke="currentColor" stroke-width="2" stroke-linecap="round" stroke-linejoin="round"><path d="M12 3H5a2 2 0 0 0-2 2v14a2 2 0 0 0 2 2h14a2 2 0 0 0 2-2v-7"/><path d="M18.375 2.625a2.121 2.121 0 1 1 3 3L12 15l-4 1 1-4Z"/></svg>
<svg class="i" style="left:1725.4px;top:684.1px;width:18px;height:18px;color:#ef4444;" viewBox="0 0 24 24" fill="none" stroke="currentColor" stroke-width="1.7" stroke-linecap="round" stroke-linejoin="round"><path d="M3 6h18"/><path d="M19 6v14c0 1-1 2-2 2H7c-1 0-2-1-2-2V6"/><path d="M8 6V4c0-1 1-2 2-2h4c1 0 2 1 2 2v2"/><path d="M10 11v6"/><path d="M14 11v6"/></svg>
<span class="t" style="left:570.2px;top:673.8px;font-size:15.5px;color:#15171c;letter-spacing:0.2px;">Supplier Co...</span>
<span class="t" style="left:570.2px;top:697.8px;font-size:13.5px;color:#70778a;letter-spacing:0.4px;">supplier_code</span>
<span class="t" style="left:1221.5px;top:684.1px;font-size:15.5px;color:#1b1f27;letter-spacing:-0.98px;">120px</span>
<span class="t" style="left:1347.6px;top:684.1px;font-size:15.5px;color:#1b1f27;letter-spacing:0.85px;">Number</span>
<span class="t" style="left:1529.9px;top:684.1px;font-size:15.5px;color:#1b1f27;letter-spacing:0.48px;">Left</span>
<div class="ln" style="left:489px;top:724px;width:1287px"></div>
<svg class="i" style="left:507px;top:746.6px;width:18px;height:18px;color:#596170;fill:#596170;" viewBox="0 0 24 24" fill="none" stroke="currentColor" stroke-width="1.7" stroke-linecap="round" stroke-linejoin="round"><circle cx="9" cy="12" r="1"/><circle cx="9" cy="5" r="1"/><circle cx="9" cy="19" r="1"/><circle cx="15" cy="12" r="1"/><circle cx="15" cy="5" r="1"/><circle cx="15" cy="19" r="1"/></svg>
<svg class="i" style="left:761.8px;top:745.9px;width:18px;height:18px;color:#16a34a;" viewBox="0 0 24 24" fill="none" stroke="currentColor" stroke-width="2" stroke-linecap="round" stroke-linejoin="round"><path d="M2 12s3-7 10-7 10 7 10 7-3 7-10 7-10-7-10-7Z"/><circle cx="12" cy="12" r="3"/></svg>
<svg class="i" style="left:870px;top:745.6999999999999px;width:18px;height:18px;color:#7a8190;" viewBox="0 0 24 24" fill="none" stroke="currentColor" stroke-width="1.7" stroke-linecap="round" stroke-linejoin="round"><rect width="18" height="11" x="3" y="11" rx="2" ry="2"/><path d="M7 11V7a5 5 0 0 1 10 0v4"/></svg>
<div class="tg " style="left:982px;top:743.2px"></div>
<div class="tg " style="left:1109px;top:743.2px"></div>
<div class="sel" style="left:1333.5px;top:740px;width:144.5px"></div>
<div class="sel" style="left:1514.2px;top:740px;width:124px"></div>
<svg class="i" style="left:1446.2px;top:746px;width:18px;height:18px;color:#6b7280;" viewBox="0 0 24 24" fill="none" stroke="currentColor" stroke-width="1.9" stroke-linecap="round" stroke-linejoin="round"><path d="m6 9 6 6 6-6"/></svg>
<svg class="i" style="left:1606.5px;top:746px;width:18px;height:18px;color:#6b7280;" viewBox="0 0 24 24" fill="none" stroke="currentColor" stroke-width="1.9" stroke-linecap="round" stroke-linejoin="round"><path d="m6 9 6 6 6-6"/></svg>
<svg class="i" style="left:1689.2px;top:745.3px;width:18px;height:18px;color:#15171c;" viewBox="0 0 24 24" fill="none" stroke="currentColor" stroke-width="2" stroke-linecap="round" stroke-linejoin="round"><path d="M12 3H5a2 2 0 0 0-2 2v14a2 2 0 0 0 2 2h14a2 2 0 0 0 2-2v-7"/><path d="M18.375 2.625a2.121 2.121 0 1 1 3 3L12 15l-4 1 1-4Z"/></svg>
<svg class="i" style="left:1725.4px;top:745.9px;width:18px;height:18px;color:#ef4444;" viewBox="0 0 24 24" fill="none" stroke="currentColor" stroke-width="1.7" stroke-linecap="round" stroke-linejoin="round"><path d="M3 6h18"/><path d="M19 6v14c0 1-1 2-2 2H7c-1 0-2-1-2-2V6"/><path d="M8 6V4c0-1 1-2 2-2h4c1 0 2 1 2 2v2"/><path d="M10 11v6"/><path d="M14 11v6"/></svg>
<span class="t" style="left:570.2px;top:735.6px;font-size:15.5px;color:#15171c;letter-spacing:0.6px;">Supplier</span>
<span class="t" style="left:1221.5px;top:745.9px;font-size:15.5px;color:#1b1f27;letter-spacing:-0.9px;">150px</span>
<span class="t" style="left:1347.6px;top:745.9px;font-size:15.5px;color:#1b1f27;letter-spacing:0.35px;">Text</span>
<span class="t" style="left:1529.9px;top:745.9px;font-size:15.5px;color:#1b1f27;letter-spacing:0.48px;">Left</span>
</div></div>
<footer class="layer" id="mfoot">
<div class="ln" style="left:96px;top:777px;width:1728px"></div>
<div class="bx" style="left:1540px;top:796px;width:95px;height:45px;border-radius:6px"></div>
<div class="a" style="left:1644px;top:796px;width:156px;height:45px;border-radius:6px;background:#18a34a"></div>
<span class="t" style="left:1560px;top:808.8px;font-size:15.5px;color:#123e32;letter-spacing:0.46px;-webkit-text-stroke:.35px currentColor;">Cancel</span>
<span class="t" style="left:1662px;top:808.8px;font-size:15.5px;color:#ffffff;letter-spacing:0.51px;-webkit-text-stroke:.55px currentColor;">Save Changes</span>
</footer>
<header id="top"></header><div class="layer" id="topc">
<svg class="i" style="left:150px;top:12px;width:44px;height:42px" viewBox="150 12 44 42"><path d="M165 15.8a12 12 0 0 0 0 24z" fill="#03d847"/><path d="M188.8 24.7A11.7 11.7 0 0 0 170.5 39.3z" fill="#03d847"/><path d="M186.7 31.4A11.65 11.65 0 0 1 169.2 46.8z" fill="#04463a"/></svg>
<svg class="i" style="left:663px;top:23px;width:24px;height:23px" viewBox="663 23 24 23"><circle cx="665.8" cy="39.3" r="1.4" fill="#9e9c9e"/><circle cx="684.4" cy="26.9" r="1.4" fill="#9e9c9e"/><path d="M675.3 24.1a7.4 7.4 0 0 0-4.3 13.4c.5.5.8 1.3.8 2.5h7c0-1.2.3-2 .8-2.5a7.4 7.4 0 0 0-4.3-13.4z" fill="#9e9c9e"/><path d="M671.8 41.4h7c0 1.7-1.5 2.7-3.5 2.7s-3.5-1-3.5-2.7z" fill="#9e9c9e"/><path d="M675.3 26.8c.4 2.8 1.6 4.1 4.6 4.7-3 .6-4.2 1.9-4.6 4.7-.4-2.8-1.6-4.1-4.6-4.7 3-.6 4.2-1.9 4.6-4.7z" fill="#fff"/></svg>
<svg class="i" style="left:789px;top:23px;width:23px;height:22px" viewBox="789 23 23 22"><circle cx="797.9" cy="34.6" r="7.1" fill="#9e9c9e"/><path d="M802.8 39.7l3.7 3.3" stroke="#9e9c9e" stroke-width="1.7" stroke-linecap="round"/><path d="M806.7 24.3c.25 2.7 1.1 3.5 3.7 3.8-2.6.3-3.45 1.1-3.7 3.8-.25-2.7-1.1-3.5-3.7-3.8 2.6-.3 3.45-1.1 3.7-3.8z" fill="#9e9c9e"/></svg>
<svg class="i" style="left:920px;top:25px;width:19px;height:19px" viewBox="0 0 19 19" fill="#9e9c9e"><path d="M2.4.8h6.5v4.6H.2V3a2.2 2.2 0 0 1 2.2-2.2z"/><path d="M.2 6h8.7v11.7H2.4A2.2 2.2 0 0 1 .2 15.5z"/><path d="M9.8.8h6.1A2.2 2.2 0 0 1 18.1 3v8.1H9.8z"/><path d="M9.8 12.5h8.3v3a2.2 2.2 0 0 1-2.2 2.2H9.8z"/></svg>
<svg class="i" style="left:1064px;top:21px;width:27px;height:27px" viewBox="1064 21 27 27" fill="#12a84a" stroke="#12a84a" stroke-width=".9" stroke-linejoin="round"><g transform="translate(1074.9 32.35) rotate(-37.3)"><path d="M0-8.6C1.9-8.6 4.6-3 4.6 2.4 4.6 5.6 3 7.4 0 7.4S-4.6 5.6-4.6 2.4C-4.6-3-1.9-8.6 0-8.6z"/><circle cx=".15" cy="-.7" r="1.35" fill="#fff" stroke="none"/><path d="M5.9 1C8 2.4 9.1 5.8 8.4 9.2L4.3 8.7C5.6 6.5 6.2 3.7 5.9 1z"/><path d="M-5.9 1C-8 2.4-9.1 5.8-8.4 9.2L-4.3 8.7C-5.6 6.5-6.2 3.7-5.9 1z"/><path d="M0 9.2L1.9 10.9-1.8 11.6z"/></g></svg>
<svg class="i" style="left:1219px;top:24px;width:21px;height:21px" viewBox="1219 24 21 21"><path d="M1222.3 25.1h14.2l1.4 6v1.1h-.9v10.5a1 1 0 0 1-1 1h-13.3a1 1 0 0 1-1-1V32.2h-1v-1.1z" fill="#9e9c9e"/><path d="M1223.7 41.7v-7.3a2.9 2.5 0 0 1 5.75-.4 2.9 2.5 0 0 1 5.75.4v7.3z" fill="#fff"/><path d="M1229.3 34.6c.2 1.9.8 2.5 2.7 2.7-1.9.2-2.5.8-2.7 2.7-.2-1.9-.8-2.5-2.7-2.7 1.9-.2 2.5-.8 2.7-2.7z" fill="#9e9c9e"/></svg>
<div class="a" style="left:1031px;top:40px;width:23px;height:17.6px;border-radius:9px;background:#0faa3f"></div>
<svg class="i" style="left:1609px;top:20px;width:27px;height:27px" viewBox="0 0 27 27" fill="none" stroke="#2f3a78" stroke-width="2" stroke-linecap="round"><circle cx="13.5" cy="13.5" r="11.4"/><path d="M10.3 10.6a3.3 3.3 0 1 1 4.9 2.9c-1.1.7-1.7 1.3-1.7 2.6"/><circle cx="13.5" cy="19.3" r=".7" fill="#2f3a78" stroke-width="1.2"/></svg>
<svg class="i" style="left:1673px;top:23px;width:26px;height:26px" viewBox="0 0 26 26" fill="none" stroke="#0a2f25" stroke-width="2.2" stroke-linecap="round" stroke-linejoin="round"><path d="M6.9 8.9a5.55 5.55 0 0 1 11.1 0c0 5.2 1 7.5 2.6 9.5H4.3c1.6-2 2.6-4.3 2.6-9.5z"/><path d="M10.6 21.7a2.2 2.2 0 0 0 3.7 0"/></svg>
<div class="a" style="left:1693.7px;top:19.1px;width:6.6px;height:6.6px;border-radius:50%;background:#0faa3f"></div>
<div class="bx" style="left:1726px;top:11px;width:109px;height:45px;border-radius:8px;border-color:#e9eaed"></div>
<svg class="i" style="left:1735.5px;top:23.5px;width:23px;height:23px" viewBox="0 0 23 23" fill="none" stroke="#8b8f94" stroke-linecap="round"><circle cx="11.5" cy="11.5" r="11" stroke="#c7cacd" stroke-width=".9"/><circle cx="11.5" cy="8.7" r="3.1" stroke-width="1.3"/><path d="M5.8 17.6c.5-3.3 2.8-4.8 5.7-4.8s5.2 1.5 5.7 4.8" stroke-width="1.3"/></svg>
<svg class="i" style="left:1820px;top:42px;width:18px;height:18px" viewBox="0 0 18 18"><circle cx="9" cy="9" r="9" fill="#0faa3f"/><path d="M5.7 6.6h6.6L9 12z" fill="#fff"/></svg>
<span class="t l" style="left:202.1px;top:21px;font-size:25px;color:#1c1c1c;letter-spacing:-0.38px;">ConverSight</span>
<span class="t" style="left:696.3px;top:24.7px;font-size:14px;color:#0c3a2d;letter-spacing:0.9px;-webkit-text-stroke:.35px currentColor;">Insights</span>
<span class="t" style="left:822px;top:24.7px;font-size:14px;color:#0c3a2d;letter-spacing:0.8px;-webkit-text-stroke:.35px currentColor;">Explorer</span>
<span class="t" style="left:950px;top:24.7px;font-size:14px;color:#0c3a2d;letter-spacing:0.82px;-webkit-text-stroke:.35px currentColor;">Storyboard</span>
<span class="t" style="left:1099.5px;top:24.7px;font-size:14px;color:#12a84a;letter-spacing:1.1px;-webkit-text-stroke:.35px currentColor;">Launchpad</span>
<span class="t" style="left:1250.3px;top:24.7px;font-size:14px;color:#0c3a2d;letter-spacing:0.86px;-webkit-text-stroke:.35px currentColor;">Market Space</span>
<span class="t b" style="left:1038.6px;top:41.8px;font-size:11px;color:#ffffff;font-weight:700;">5</span>
<span class="t" style="left:1764.9px;top:24.9px;font-size:15px;color:#23433a;letter-spacing:0.29px;">Athena</span>
</div>
<div class="a" id="chat" style="left:1785px;top:781px;width:73px;height:74px;border-radius:50%;background:#fff;border:4.5px solid #e6e6e6;box-shadow:0 3px 10px rgba(0,0,0,.14),inset 0 -6px 8px -4px rgba(0,0,0,.05)"></div>
<svg class="i" style="left:1798px;top:800px;width:44px;height:42px" viewBox="1798 800 44 42"><path d="M1801.8 802.7h6l-.7 15.8-4.6-.6z" fill="#04463a"/><path d="M1820.8 803.8c-5.4.2-9.5 3.5-9.5 7.6 0 4 3.2 7.2 7.8 8.2z" fill="#04463a"/><path d="M1815.8 830c7.6-.8 14.6-3.5 20.1-7.9 1.5 6.8-1.3 13.2-7.2 14.9-5.5 1.5-10.9-1.4-12.9-7z" fill="#03d847"/></svg>
<div class="a" id="hl" style="left:1629px;top:782px;width:174px;height:69px;border:5px solid #ff7f27"></div>
<div class="a" style="left:0;top:876px;width:1919px;height:1px;background:#33303a"></div>
</body>
</html>
